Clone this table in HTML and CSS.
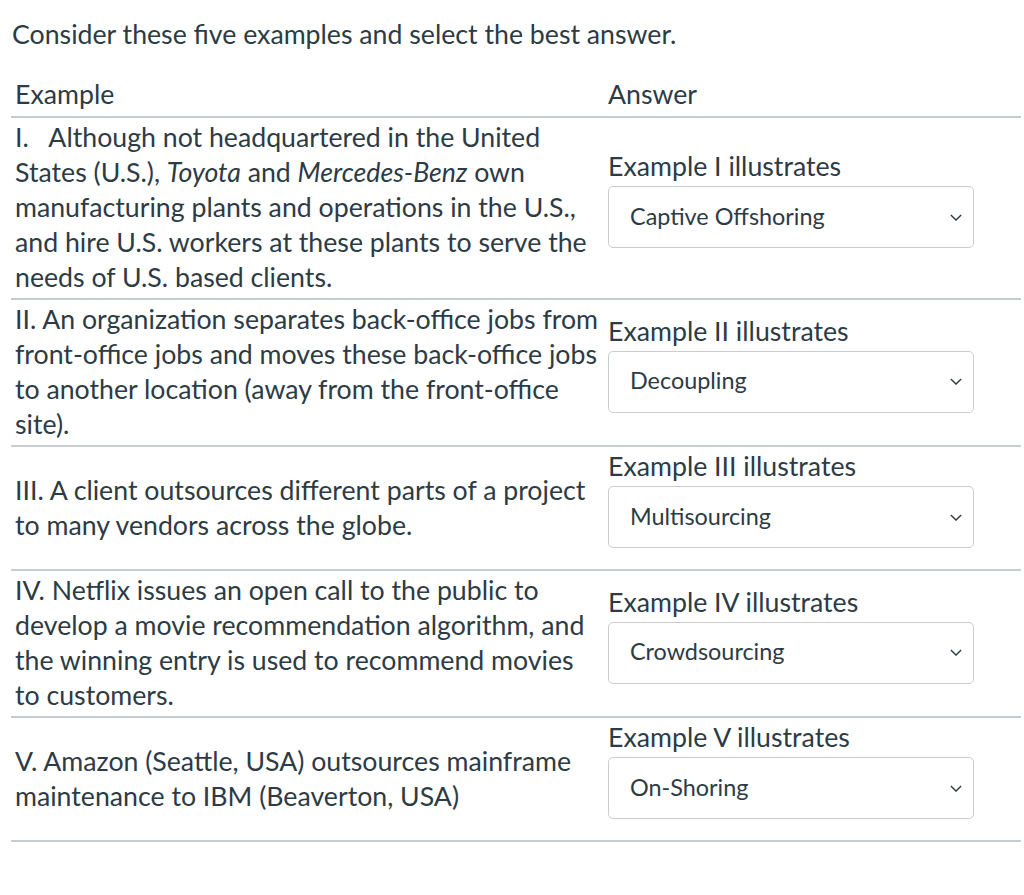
FILE: index.html
```html
<!DOCTYPE html>
<html>
<head>
<meta charset="utf-8">
<link rel="stylesheet" href="styles.css">
</head>
<body>
<div class="page">
  <p class="prompt">Consider these five examples and select the best answer.</p>
  <table class="match">
    <thead>
      <tr><th class="c-ex">Example</th><th class="c-ans">Answer</th></tr>
    </thead>
    <tbody>
      <tr>
        <td class="c-ex">I.&nbsp;&nbsp; Although not headquartered in the United States (U.S.), <em>Toyota</em> and <em>Mercedes-Benz</em> own manufacturing plants and operations in the U.S., and hire U.S. workers at these plants to serve the needs of U.S. based clients.</td>
        <td class="c-ans"><div class="lbl">Example I illustrates</div><div class="sel"><span>Captive Offshoring</span><svg viewBox="0 0 14 8" class="chev"><path d="M1 1l6 6 6-6"/></svg></div></td>
      </tr>
      <tr>
        <td class="c-ex">II. An organization separates back-office jobs from front-office jobs and moves these back-office jobs to another location (away from the front-office site).</td>
        <td class="c-ans"><div class="lbl">Example II illustrates</div><div class="sel"><span>Decoupling</span><svg viewBox="0 0 14 8" class="chev"><path d="M1 1l6 6 6-6"/></svg></div></td>
      </tr>
      <tr>
        <td class="c-ex">III. A client outsources different parts of a project to many vendors across the globe.</td>
        <td class="c-ans"><div class="lbl">Example III illustrates</div><div class="sel"><span>Multisourcing</span><svg viewBox="0 0 14 8" class="chev"><path d="M1 1l6 6 6-6"/></svg></div></td>
      </tr>
      <tr>
        <td class="c-ex">IV. Netflix issues an open call to the public to develop a movie recommendation algorithm, and the winning entry is used to recommend movies to customers.</td>
        <td class="c-ans"><div class="lbl">Example IV illustrates</div><div class="sel"><span>Crowdsourcing</span><svg viewBox="0 0 14 8" class="chev"><path d="M1 1l6 6 6-6"/></svg></div></td>
      </tr>
      <tr>
        <td class="c-ex">V. Amazon (Seattle, USA) outsources mainframe maintenance to IBM (Beaverton, USA)</td>
        <td class="c-ans"><div class="lbl">Example V illustrates</div><div class="sel"><span>On-Shoring</span><svg viewBox="0 0 14 8" class="chev"><path d="M1 1l6 6 6-6"/></svg></div></td>
      </tr>
    </tbody>
  </table>
</div>
</body>
</html>
```

FILE: styles.css
```css
html, body {
  margin: 0;
  padding: 0;
  background: #ffffff;
}
body {
  font-family: Lato, "Liberation Sans", sans-serif;
  color: #2d3b45;
}
.page {
  padding: 0 3px 0 11px;
}
.prompt {
  margin: 0;
  padding: 17px 0 0 1px;
  font-size: 26.7px;
  line-height: 34px;
}
.match {
  margin-top: 26px;
  width: 1010px;
  border-collapse: collapse;
  font-size: 26.7px;
  line-height: 35px;
}
.match th {
  font-weight: normal;
  text-align: left;
  padding: 0 0 4px 0;
  border-bottom: 2px solid #c7cdd1;
  vertical-align: bottom;
}
.match td {
  border-bottom: 2px solid #c7cdd1;
  vertical-align: middle;
  padding: 2px 0 3px 0;
}
.c-ex {
  width: 588px;
  padding-left: 4px !important;
  padding-right: 5px !important;
}
.match th.c-ans,
.match td.c-ans {
  padding-left: 0;
}
.match td.c-ans {
  padding-top: 2px;
  padding-bottom: 21px;
}
.lbl {
  line-height: 35px;
  padding-bottom: 2px;
}
.sel {
  box-sizing: border-box;
  width: 366px;
  height: 62px;
  border: 1px solid #c7cdd1;
  border-radius: 5px;
  display: flex;
  align-items: center;
  justify-content: space-between;
  padding: 0 11px 0 21px;
  font-size: 23.4px;
}
.sel span {
  position: relative;
  top: -1px;
}
.chev {
  width: 12px;
  height: 7px;
  fill: none;
  stroke: #2d3b45;
  stroke-width: 1.6;
}
```
